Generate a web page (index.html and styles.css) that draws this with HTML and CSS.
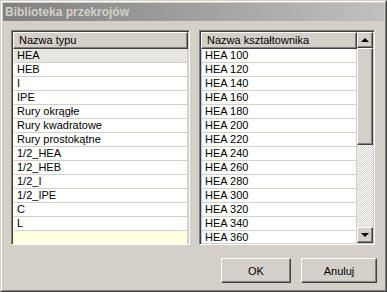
FILE: index.html
```html
<!DOCTYPE html>
<html lang="pl">
<head>
    <meta charset="UTF-8">
    <title>Biblioteka przekrojów</title>
    <link rel="stylesheet" href="styles.css">
</head>
<body>
    <div class="window">
        <div class="window-inner">
            <div class="titlebar">Biblioteka przekrojów</div>
            <div class="content">
                <div class="lists">
                    <div class="grid grid-types">
                        <div class="grid-header">Nazwa typu</div>
                        <div class="grid-rows rows-types">
                            <div class="row selected">HEA</div>
                            <div class="row">HEB</div>
                            <div class="row">I</div>
                            <div class="row">IPE</div>
                            <div class="row">Rury okrągłe</div>
                            <div class="row">Rury kwadratowe</div>
                            <div class="row">Rury prostokątne</div>
                            <div class="row">1/2_HEA</div>
                            <div class="row">1/2_HEB</div>
                            <div class="row">1/2_I</div>
                            <div class="row">1/2_IPE</div>
                            <div class="row">C</div>
                            <div class="row">L</div>
                            <div class="row empty"></div>
                        </div>
                    </div>
                    <div class="grid grid-shapes">
                        <div class="grid-main">
                            <div class="grid-header">Nazwa kształtownika</div>
                            <div class="grid-rows rows-shapes">
                                <div class="row">HEA 100</div>
                                <div class="row">HEA 120</div>
                                <div class="row">HEA 140</div>
                                <div class="row">HEA 160</div>
                                <div class="row">HEA 180</div>
                                <div class="row">HEA 200</div>
                                <div class="row">HEA 220</div>
                                <div class="row">HEA 240</div>
                                <div class="row">HEA 260</div>
                                <div class="row">HEA 280</div>
                                <div class="row">HEA 300</div>
                                <div class="row">HEA 320</div>
                                <div class="row">HEA 340</div>
                                <div class="row">HEA 360</div>
                            </div>
                        </div>
                        <div class="scrollbar">
                            <div class="scroll-btn"><span class="arrow-up"></span></div>
                            <div class="scroll-thumb"></div>
                            <div class="scroll-track"></div>
                            <div class="scroll-btn"><span class="arrow-down"></span></div>
                        </div>
                    </div>
                </div>
                <div class="buttons">
                    <button class="btn btn-ok">OK</button>
                    <button class="btn btn-cancel">Anuluj</button>
                </div>
            </div>
        </div>
    </div>
</body>
</html>
```

FILE: styles.css
```css
html, body {
    margin: 0;
    padding: 0;
    background-color: #d4d0c8;
}
.window {
    width: 387px;
    height: 292px;
    box-sizing: border-box;
    border: 1px solid;
    border-color: #d4d0c8 #404040 #404040 #d4d0c8;
    font-family: "Liberation Sans", Arial, sans-serif;
    font-size: 11px;
    color: #000;
}
.window-inner {
    height: 100%;
    box-sizing: border-box;
    border: 1px solid;
    border-color: #fff #808080 #808080 #fff;
    padding: 1px;
}
.titlebar {
    height: 18px;
    line-height: 18px;
    padding-left: 2px;
    background: linear-gradient(to right, #808080, #c0c0c0);
    color: #d4d0c8;
    font-weight: bold;
    font-size: 12px;
}
.content {
    padding: 9px 7px 0 8px;
}
.lists {
    display: flex;
    gap: 9px;
}
.grid {
    height: 215px;
    box-sizing: border-box;
    border: 1px solid;
    border-color: #808080 #fff #fff #808080;
    background-color: #fff;
    overflow: hidden;
}
.grid-types {
    width: 179px;
}
.grid-shapes {
    width: 176px;
    display: flex;
}
.grid > * {
    box-sizing: border-box;
}
.grid-types,
.grid-shapes {
    box-shadow: inset 1px 1px #404040, inset -1px -1px #d4d0c8;
    padding: 1px;
}
.grid-main {
    flex: 1;
    min-width: 0;
}
.grid-header {
    height: 17px;
    line-height: 15px;
    box-sizing: border-box;
    padding-left: 5px;
    background-color: #d4d0c8;
    border: 1px solid;
    border-color: #fff #404040 #404040 #fff;
    box-shadow: inset -1px -1px #808080;
}
.row {
    height: 14px;
    line-height: 13px;
    box-sizing: border-box;
    padding-left: 3px;
    border-bottom: 1px solid #d4d0c8;
    border-right: 1px solid #d4d0c8;
    white-space: nowrap;
}
.rows-types .row {
    border-left: 1px solid #fbf6c8;
}
.rows-shapes .row {
    border-left: 1px solid #a6caf0;
}
.row.selected {
    background-color: #e8e6e0;
}
.row.empty {
    height: 13px;
    background-color: #ffffe1;
    border-bottom: none;
}
.scrollbar {
    width: 16px;
    display: flex;
    flex-direction: column;
    background-color: #d4d0c8;
}
.scroll-btn,
.scroll-thumb {
    box-sizing: border-box;
    background-color: #d4d0c8;
    border: 1px solid;
    border-color: #fff #404040 #404040 #fff;
    box-shadow: inset -1px -1px #808080;
}
.scroll-btn {
    height: 16px;
    display: flex;
    align-items: center;
    justify-content: center;
}
.scroll-thumb {
    height: 97px;
}
.scroll-track {
    flex: 1;
    background: repeating-conic-gradient(#d4d0c8 0 25%, #fff 0 50%) 0 0 / 2px 2px;
}
.arrow-up {
    width: 0;
    height: 0;
    border-left: 4px solid transparent;
    border-right: 4px solid transparent;
    border-bottom: 4px solid #000;
}
.arrow-down {
    width: 0;
    height: 0;
    border-left: 4px solid transparent;
    border-right: 4px solid transparent;
    border-top: 4px solid #000;
}
.buttons {
    display: flex;
    justify-content: flex-end;
    gap: 10px;
    margin-top: 13px;
}
.btn {
    height: 25px;
    padding: 0;
    background-color: #d4d0c8;
    border: 1px solid;
    border-color: #fff #404040 #404040 #fff;
    box-shadow: inset -1px -1px #808080;
    font-family: "Liberation Sans", Arial, sans-serif;
    font-size: 11px;
    color: #000;
}
.btn-ok {
    width: 70px;
}
.btn-cancel {
    width: 76px;
}
```
